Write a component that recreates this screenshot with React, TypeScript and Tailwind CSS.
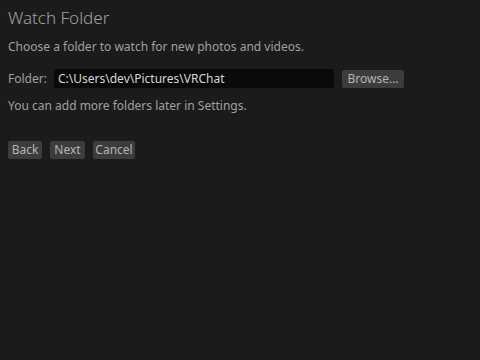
import React from "react";

export default function App() {
  const font = { fontFamily: '"Noto Sans", "Open Sans", sans-serif' };
  const btn =
    "h-[18px] bg-[#3c3c3c] rounded-[2px] leading-[18px] text-[#b4b4b4] text-center";
  return (
    <div
      className="w-[480px] h-[360px] bg-[#1b1b1b] px-[8px] pt-[8px] text-[#a0a0a0] overflow-hidden"
      style={font}
    >
      <div className="h-[20px] leading-[20px] text-[17px] font-light">Watch Folder</div>
      <div className="mt-[11px] h-[16px] leading-[16px] text-[12px]">
        Choose a folder to watch for new photos and videos.
      </div>
      <div className="mt-[14px] h-[19px] flex items-center text-[12px]">
        <span className="w-[46px] leading-[16px]">Folder:</span>
        <div className="w-[280px] h-[19px] bg-[#0a0a0a] rounded-[2px] pl-[4px] leading-[19px] text-[#d6d6d6]">
          C:\Users\dev\Pictures\VRChat
        </div>
        <button className={`${btn} ml-[8px] w-[62px]`}>Browse…</button>
      </div>
      <div className="mt-[10px] h-[16px] leading-[16px] text-[12px]">
        You can add more folders later in Settings.
      </div>
      <div className="mt-[27px] flex gap-[8px] text-[12px]">
        <button className={`${btn} w-[34px]`}>Back</button>
        <button className={`${btn} w-[35px]`}>Next</button>
        <button className={`${btn} w-[42px]`}>Cancel</button>
      </div>
    </div>
  );
}
